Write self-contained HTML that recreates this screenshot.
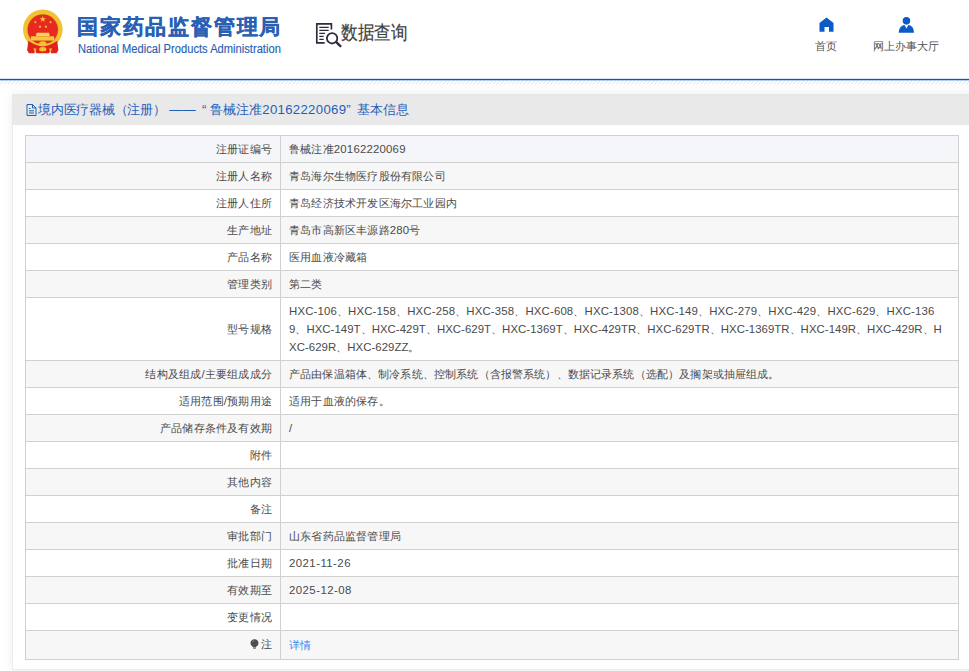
<!DOCTYPE html>
<html><head><meta charset="utf-8">
<style>
html,body{margin:0;padding:0;background:#fff;}
body{width:969px;height:671px;overflow:hidden;position:relative;font-family:"Liberation Sans",sans-serif;}
.abs{position:absolute;}
#topline{position:absolute;left:0;top:79px;width:969px;height:1px;background:#0659c2;box-shadow:0 -0.5px 0 rgba(6,89,194,0.35),0 1px 0 rgba(6,89,194,0.3);}
#hatch{position:absolute;left:0;top:80px;width:969px;height:5px;
 background:repeating-linear-gradient(135deg,#fff 0,#fff 2px,#e6e6e6 2px,#e6e6e6 3px,#fff 3px,#fff 4px);}
#title-cn{left:77px;top:12.5px;font-size:21px;letter-spacing:1.8px;font-weight:bold;color:#2b5fb3;-webkit-text-stroke:0.3px #2b5fb3;white-space:nowrap;}
#title-en{left:77.5px;top:42px;font-size:12px;color:#2b5fb3;white-space:nowrap;transform:scaleX(0.93);transform-origin:0 0;-webkit-text-stroke:0.15px #2b5fb3;}
#sjcx{left:341px;top:20px;font-size:19px;color:#404040;white-space:nowrap;transform:scaleX(0.875);transform-origin:0 0;-webkit-text-stroke:0.2px #404040;}
.nav{font-size:11.4px;color:#505050;white-space:nowrap;}
#panel{position:absolute;left:12px;top:94px;width:980px;height:576px;background:#fff;
 box-shadow:0 0 10px rgba(0,0,0,0.08);}
#phead{position:absolute;left:0;top:0;width:100%;height:30.5px;background:#e9e9e9;}
#ptitle{position:absolute;left:26px;top:7px;font-size:13.2px;color:#1f5fb8;white-space:nowrap;}
table{position:absolute;left:13px;top:41px;border-collapse:collapse;width:934px;table-layout:fixed;}
td{border:1px solid #d0d0d0;font-size:11.4px;letter-spacing:0.2px;color:#4a4a4a;padding:0 8px;height:26px;line-height:18px;vertical-align:middle;}
td.l{text-align:right;padding-right:8px;}
.ml{overflow:visible;}
#ml1{letter-spacing:0.157px}
#ml2{letter-spacing:0.047px}
#ml3{letter-spacing:0.047px}
td.v{padding-left:8px;}
tr:nth-child(even) td{background:#f7f7f7;}
tr.hov td{background:#f4f6f9;}
a{color:#3b86f5;text-decoration:none;position:relative;top:0px;}
</style></head>
<body>
<!-- emblem -->
<svg class="abs" style="left:0;top:0" width="70" height="60" viewBox="0 0 70 60">
 <circle cx="42.8" cy="29.4" r="19.8" fill="#f2c232"/>
 <circle cx="42.75" cy="29.6" r="15.6" fill="#d9a31e"/>
 <circle cx="42.75" cy="29.6" r="15.1" fill="#e8291f"/>
 <polygon points="42.80,16.00 43.54,18.28 45.94,18.28 44.00,19.69 44.74,21.97 42.80,20.56 40.86,21.97 41.60,19.69 39.66,18.28 42.06,18.28" fill="#f3cf3a"/>
 <polygon points="36.10,20.71 35.94,21.82 36.87,22.43 35.77,22.62 35.47,23.69 34.95,22.71 33.84,22.75 34.62,21.95 34.23,20.91 35.23,21.40" fill="#f3cf3a"/>
 <polygon points="49.70,20.71 50.57,21.40 51.57,20.91 51.18,21.95 51.96,22.75 50.85,22.71 50.33,23.69 50.03,22.62 48.93,22.43 49.86,21.82" fill="#f3cf3a"/>
 <polygon points="40.41,25.15 40.54,26.26 41.60,26.62 40.59,27.08 40.57,28.19 39.82,27.38 38.76,27.71 39.30,26.74 38.66,25.83 39.75,26.05" fill="#f3cf3a"/>
 <polygon points="45.49,25.15 46.15,26.05 47.24,25.83 46.60,26.74 47.14,27.71 46.08,27.38 45.33,28.19 45.31,27.08 44.30,26.62 45.36,26.26" fill="#f3cf3a"/>
 <path d="M36.6 32.8 H49 L49.8 36.2 H35.8Z" fill="#f6d262"/>
 <rect x="30.9" y="36.3" width="23.2" height="4.3" fill="#f2c93c"/>
 <path d="M28.3 40.8 Q34 42.5 38 44.5 Q42.7 47.5 47.4 44.5 Q51.5 42.5 57.2 40.8 L58.4 50.3 L56.5 53.3 H51 L50.3 50 L49.2 53.3 H36.3 L35.2 50 L34.5 53.3 H29 L27.1 50.3Z" fill="#e2231b"/>
 <path d="M28.5 39.8 Q35 44.5 42.75 45.6 Q50.5 44.5 57 39.8" fill="none" stroke="#f2c232" stroke-width="2"/>
 <ellipse cx="42.75" cy="43.4" rx="3.6" ry="2.2" fill="#f2c232"/>
 <ellipse cx="42.75" cy="49.3" rx="3.6" ry="2.2" fill="#f2c232"/>
 <path d="M33.2 48.5 L36.5 48.5 L35 52.5Z M48.9 48.5 L52.2 48.5 L50.5 52.5Z" fill="#f2c232"/>
</svg>
<div id="title-cn" class="abs">国家药品监督管理局</div>
<div id="title-en" class="abs">National Medical Products Administration</div>
<!-- data query icon -->
<svg class="abs" style="left:314px;top:21px" width="30" height="28" viewBox="0 0 30 28">
 <path d="M10.7 21.8 H2.8 V2.8 H17.4 V8.6" fill="none" stroke="#2d2d3d" stroke-width="1.7"/>
 <path d="M5.3 6.4 H14.7 M5.3 9.4 H14.7 M5.3 12.3 H11 M5.3 15.4 H9.7 M5.3 18.4 H9.7" stroke="#2d2d3d" stroke-width="1.3"/>
 <circle cx="18.1" cy="17.3" r="5.2" fill="none" stroke="#2d2d3d" stroke-width="1.8"/>
 <path d="M22.5 21.3 L26.4 25.1" stroke="#2d2d3d" stroke-width="2.4" stroke-linecap="round"/>
</svg>
<div id="sjcx" class="abs">数据查询</div>
<!-- home -->
<svg class="abs" style="left:818.5px;top:17px" width="16" height="16" viewBox="0 0 16 16">
 <path d="M0.5 6 L7.5 0.5 L14.5 6 V14.8 H10 V10 H5.5 V14.8 H0.5Z" fill="#0a5bc6"/>
</svg>
<div class="abs nav" style="left:815px;top:39px">首页</div>
<!-- user -->
<svg class="abs" style="left:894px;top:12px" width="24" height="24" viewBox="0 0 24 24">
 <circle cx="12.45" cy="8.85" r="3.8" fill="#0a5bc6"/>
 <path d="M4.8 20.7 C4.8 16.2 7.2 13.4 10.6 13 L12.4 16.4 L14.4 13 C17.8 13.4 20 16.2 20 20.7 Z" fill="#0a5bc6"/>
</svg>
<div class="abs nav" style="left:873px;top:39px">网上办事大厅</div>

<div id="topline"></div>
<svg id="hatch2" class="abs" style="left:0;top:0" width="969" height="90"><path d="M-4.00 84.5 L-0.50 81 M-0.15 84.5 L3.35 81 M3.70 84.5 L7.20 81 M7.55 84.5 L11.05 81 M11.40 84.5 L14.90 81 M15.25 84.5 L18.75 81 M19.10 84.5 L22.60 81 M22.95 84.5 L26.45 81 M26.80 84.5 L30.30 81 M30.65 84.5 L34.15 81 M34.50 84.5 L38.00 81 M38.35 84.5 L41.85 81 M42.20 84.5 L45.70 81 M46.05 84.5 L49.55 81 M49.90 84.5 L53.40 81 M53.75 84.5 L57.25 81 M57.60 84.5 L61.10 81 M61.45 84.5 L64.95 81 M65.30 84.5 L68.80 81 M69.15 84.5 L72.65 81 M73.00 84.5 L76.50 81 M76.85 84.5 L80.35 81 M80.70 84.5 L84.20 81 M84.55 84.5 L88.05 81 M88.40 84.5 L91.90 81 M92.25 84.5 L95.75 81 M96.10 84.5 L99.60 81 M99.95 84.5 L103.45 81 M103.80 84.5 L107.30 81 M107.65 84.5 L111.15 81 M111.50 84.5 L115.00 81 M115.35 84.5 L118.85 81 M119.20 84.5 L122.70 81 M123.05 84.5 L126.55 81 M126.90 84.5 L130.40 81 M130.75 84.5 L134.25 81 M134.60 84.5 L138.10 81 M138.45 84.5 L141.95 81 M142.30 84.5 L145.80 81 M146.15 84.5 L149.65 81 M150.00 84.5 L153.50 81 M153.85 84.5 L157.35 81 M157.70 84.5 L161.20 81 M161.55 84.5 L165.05 81 M165.40 84.5 L168.90 81 M169.25 84.5 L172.75 81 M173.10 84.5 L176.60 81 M176.95 84.5 L180.45 81 M180.80 84.5 L184.30 81 M184.65 84.5 L188.15 81 M188.50 84.5 L192.00 81 M192.35 84.5 L195.85 81 M196.20 84.5 L199.70 81 M200.05 84.5 L203.55 81 M203.90 84.5 L207.40 81 M207.75 84.5 L211.25 81 M211.60 84.5 L215.10 81 M215.45 84.5 L218.95 81 M219.30 84.5 L222.80 81 M223.15 84.5 L226.65 81 M227.00 84.5 L230.50 81 M230.85 84.5 L234.35 81 M234.70 84.5 L238.20 81 M238.55 84.5 L242.05 81 M242.40 84.5 L245.90 81 M246.25 84.5 L249.75 81 M250.10 84.5 L253.60 81 M253.95 84.5 L257.45 81 M257.80 84.5 L261.30 81 M261.65 84.5 L265.15 81 M265.50 84.5 L269.00 81 M269.35 84.5 L272.85 81 M273.20 84.5 L276.70 81 M277.05 84.5 L280.55 81 M280.90 84.5 L284.40 81 M284.75 84.5 L288.25 81 M288.60 84.5 L292.10 81 M292.45 84.5 L295.95 81 M296.30 84.5 L299.80 81 M300.15 84.5 L303.65 81 M304.00 84.5 L307.50 81 M307.85 84.5 L311.35 81 M311.70 84.5 L315.20 81 M315.55 84.5 L319.05 81 M319.40 84.5 L322.90 81 M323.25 84.5 L326.75 81 M327.10 84.5 L330.60 81 M330.95 84.5 L334.45 81 M334.80 84.5 L338.30 81 M338.65 84.5 L342.15 81 M342.50 84.5 L346.00 81 M346.35 84.5 L349.85 81 M350.20 84.5 L353.70 81 M354.05 84.5 L357.55 81 M357.90 84.5 L361.40 81 M361.75 84.5 L365.25 81 M365.60 84.5 L369.10 81 M369.45 84.5 L372.95 81 M373.30 84.5 L376.80 81 M377.15 84.5 L380.65 81 M381.00 84.5 L384.50 81 M384.85 84.5 L388.35 81 M388.70 84.5 L392.20 81 M392.55 84.5 L396.05 81 M396.40 84.5 L399.90 81 M400.25 84.5 L403.75 81 M404.10 84.5 L407.60 81 M407.95 84.5 L411.45 81 M411.80 84.5 L415.30 81 M415.65 84.5 L419.15 81 M419.50 84.5 L423.00 81 M423.35 84.5 L426.85 81 M427.20 84.5 L430.70 81 M431.05 84.5 L434.55 81 M434.90 84.5 L438.40 81 M438.75 84.5 L442.25 81 M442.60 84.5 L446.10 81 M446.45 84.5 L449.95 81 M450.30 84.5 L453.80 81 M454.15 84.5 L457.65 81 M458.00 84.5 L461.50 81 M461.85 84.5 L465.35 81 M465.70 84.5 L469.20 81 M469.55 84.5 L473.05 81 M473.40 84.5 L476.90 81 M477.25 84.5 L480.75 81 M481.10 84.5 L484.60 81 M484.95 84.5 L488.45 81 M488.80 84.5 L492.30 81 M492.65 84.5 L496.15 81 M496.50 84.5 L500.00 81 M500.35 84.5 L503.85 81 M504.20 84.5 L507.70 81 M508.05 84.5 L511.55 81 M511.90 84.5 L515.40 81 M515.75 84.5 L519.25 81 M519.60 84.5 L523.10 81 M523.45 84.5 L526.95 81 M527.30 84.5 L530.80 81 M531.15 84.5 L534.65 81 M535.00 84.5 L538.50 81 M538.85 84.5 L542.35 81 M542.70 84.5 L546.20 81 M546.55 84.5 L550.05 81 M550.40 84.5 L553.90 81 M554.25 84.5 L557.75 81 M558.10 84.5 L561.60 81 M561.95 84.5 L565.45 81 M565.80 84.5 L569.30 81 M569.65 84.5 L573.15 81 M573.50 84.5 L577.00 81 M577.35 84.5 L580.85 81 M581.20 84.5 L584.70 81 M585.05 84.5 L588.55 81 M588.90 84.5 L592.40 81 M592.75 84.5 L596.25 81 M596.60 84.5 L600.10 81 M600.45 84.5 L603.95 81 M604.30 84.5 L607.80 81 M608.15 84.5 L611.65 81 M612.00 84.5 L615.50 81 M615.85 84.5 L619.35 81 M619.70 84.5 L623.20 81 M623.55 84.5 L627.05 81 M627.40 84.5 L630.90 81 M631.25 84.5 L634.75 81 M635.10 84.5 L638.60 81 M638.95 84.5 L642.45 81 M642.80 84.5 L646.30 81 M646.65 84.5 L650.15 81 M650.50 84.5 L654.00 81 M654.35 84.5 L657.85 81 M658.20 84.5 L661.70 81 M662.05 84.5 L665.55 81 M665.90 84.5 L669.40 81 M669.75 84.5 L673.25 81 M673.60 84.5 L677.10 81 M677.45 84.5 L680.95 81 M681.30 84.5 L684.80 81 M685.15 84.5 L688.65 81 M689.00 84.5 L692.50 81 M692.85 84.5 L696.35 81 M696.70 84.5 L700.20 81 M700.55 84.5 L704.05 81 M704.40 84.5 L707.90 81 M708.25 84.5 L711.75 81 M712.10 84.5 L715.60 81 M715.95 84.5 L719.45 81 M719.80 84.5 L723.30 81 M723.65 84.5 L727.15 81 M727.50 84.5 L731.00 81 M731.35 84.5 L734.85 81 M735.20 84.5 L738.70 81 M739.05 84.5 L742.55 81 M742.90 84.5 L746.40 81 M746.75 84.5 L750.25 81 M750.60 84.5 L754.10 81 M754.45 84.5 L757.95 81 M758.30 84.5 L761.80 81 M762.15 84.5 L765.65 81 M766.00 84.5 L769.50 81 M769.85 84.5 L773.35 81 M773.70 84.5 L777.20 81 M777.55 84.5 L781.05 81 M781.40 84.5 L784.90 81 M785.25 84.5 L788.75 81 M789.10 84.5 L792.60 81 M792.95 84.5 L796.45 81 M796.80 84.5 L800.30 81 M800.65 84.5 L804.15 81 M804.50 84.5 L808.00 81 M808.35 84.5 L811.85 81 M812.20 84.5 L815.70 81 M816.05 84.5 L819.55 81 M819.90 84.5 L823.40 81 M823.75 84.5 L827.25 81 M827.60 84.5 L831.10 81 M831.45 84.5 L834.95 81 M835.30 84.5 L838.80 81 M839.15 84.5 L842.65 81 M843.00 84.5 L846.50 81 M846.85 84.5 L850.35 81 M850.70 84.5 L854.20 81 M854.55 84.5 L858.05 81 M858.40 84.5 L861.90 81 M862.25 84.5 L865.75 81 M866.10 84.5 L869.60 81 M869.95 84.5 L873.45 81 M873.80 84.5 L877.30 81 M877.65 84.5 L881.15 81 M881.50 84.5 L885.00 81 M885.35 84.5 L888.85 81 M889.20 84.5 L892.70 81 M893.05 84.5 L896.55 81 M896.90 84.5 L900.40 81 M900.75 84.5 L904.25 81 M904.60 84.5 L908.10 81 M908.45 84.5 L911.95 81 M912.30 84.5 L915.80 81 M916.15 84.5 L919.65 81 M920.00 84.5 L923.50 81 M923.85 84.5 L927.35 81 M927.70 84.5 L931.20 81 M931.55 84.5 L935.05 81 M935.40 84.5 L938.90 81 M939.25 84.5 L942.75 81 M943.10 84.5 L946.60 81 M946.95 84.5 L950.45 81 M950.80 84.5 L954.30 81 M954.65 84.5 L958.15 81 M958.50 84.5 L962.00 81 M962.35 84.5 L965.85 81 M966.20 84.5 L969.70 81 M970.05 84.5 L973.55 81 M973.90 84.5 L977.40 81" stroke="#e2e2e2" stroke-width="1" fill="none"/></svg>

<div id="panel"><div class="abs" style="left:0;top:575px;width:100%;height:1px;background:#ebebeb"></div><div class="abs" style="left:0;top:30px;width:1px;height:546px;background:#ececec"></div>
 <div id="phead">
  <svg class="abs" style="left:14px;top:10px" width="11" height="12" viewBox="0 0 11 12">
   <path d="M1 0.5 H6.5 L10 4 V11.5 H1Z M6.5 0.5 V4 H10" fill="none" stroke="#1f5fb8" stroke-width="1"/>
   <path d="M3 4.5 H4.5 M3 6.8 H8 M3 9 H8" stroke="#1f5fb8" stroke-width="1"/>
  </svg>
  <div id="ptitle"><span style="letter-spacing:-0.23px">境内医疗器械（注册）</span> —— <span style="margin-left:2.5px;margin-right:4px">“</span>鲁械注准<span style="letter-spacing:0.3px">20162220069</span><span style="margin-right:6px">”</span>基本信息</div>
 </div>
 <table><colgroup><col style="width:255px"><col></colgroup>
  <tr class="hov"><td class="l">注册证编号</td><td class="v">鲁械注准20162220069</td></tr>
  <tr><td class="l">注册人名称</td><td class="v">青岛海尔生物医疗股份有限公司</td></tr>
  <tr><td class="l">注册人住所</td><td class="v">青岛经济技术开发区海尔工业园内</td></tr>
  <tr><td class="l">生产地址</td><td class="v">青岛市高新区丰源路280号</td></tr>
  <tr><td class="l">产品名称</td><td class="v">医用血液冷藏箱</td></tr>
  <tr><td class="l">管理类别</td><td class="v">第二类</td></tr>
  <tr><td class="l">型号规格</td><td class="v" style="height:62px;white-space:nowrap"><div class="ml" id="ml1">HXC-106、HXC-158、HXC-258、HXC-358、HXC-608、HXC-1308、HXC-149、HXC-279、HXC-429、HXC-629、HXC-136</div><div class="ml" id="ml2">9、HXC-149T、HXC-429T、HXC-629T、HXC-1369T、HXC-429TR、HXC-629TR、HXC-1369TR、HXC-149R、HXC-429R、H</div><div class="ml" id="ml3">XC-629R、HXC-629ZZ。</div></td></tr>
  <tr><td class="l">结构及组成/主要组成成分</td><td class="v" style="letter-spacing:0.15px">产品由保温箱体、制冷系统、控制系统（含报警系统）、数据记录系统（选配）及搁架或抽屉组成。</td></tr>
  <tr><td class="l">适用范围/预期用途</td><td class="v">适用于血液的保存。</td></tr>
  <tr><td class="l">产品储存条件及有效期</td><td class="v">/</td></tr>
  <tr><td class="l">附件</td><td class="v"></td></tr>
  <tr><td class="l">其他内容</td><td class="v"></td></tr>
  <tr><td class="l">备注</td><td class="v"></td></tr>
  <tr><td class="l">审批部门</td><td class="v">山东省药品监督管理局</td></tr>
  <tr><td class="l">批准日期</td><td class="v" style="letter-spacing:0.45px">2021-11-26</td></tr>
  <tr><td class="l">有效期至</td><td class="v" style="letter-spacing:0.45px">2025-12-08</td></tr>
  <tr><td class="l">变更情况</td><td class="v"></td></tr>
  <tr><td class="l" style="height:28px"><span style="position:relative;top:-1px"><svg width="9" height="10" viewBox="0 0 9 10" style="vertical-align:-1px;margin-right:2px"><path d="M4.5 0.3 C7 0.3 8.5 2 8.5 4.2 C8.5 5.8 7.4 6.6 6.3 7.6 L6 8.4 H3 L2.7 7.6 C1.6 6.6 0.5 5.8 0.5 4.2 C0.5 2 2 0.3 4.5 0.3Z" fill="#4d4d4d"/><rect x="3.1" y="8.7" width="2.8" height="1.2" fill="#888"/><path d="M2.5 3 Q3 1.8 4.2 1.5" stroke="#aaa" stroke-width="0.7" fill="none"/></svg>注</span></td><td class="v"><a>详情</a></td></tr>
 </table>
</div>
</body></html>
